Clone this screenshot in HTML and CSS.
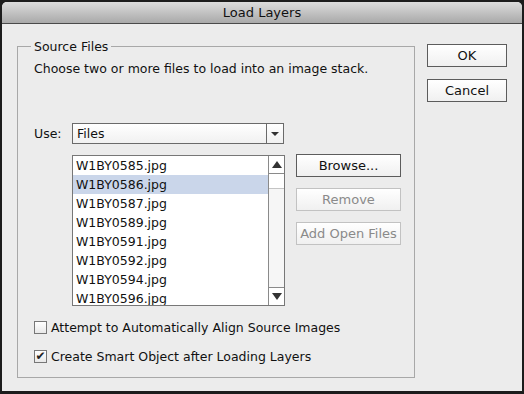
FILE: index.html
```html
<!DOCTYPE html>
<html lang="en">

<head>
    <meta charset="UTF-8">
    <meta name="viewport" content="width=device-width, initial-scale=1.0">
    <title>Load Layers</title>
    <link rel="stylesheet" href="styles.css">
</head>

<body>
    <div class="window">
        <div class="titlebar">Load Layers</div>

        <div class="content">
            <!-- Source Files group -->
            <fieldset class="group">
                <legend>Source Files</legend>
                <p class="hint">Choose two or more files to load into an image stack.</p>

                <div class="use-row">
                    <span class="use-label">Use:</span>
                    <div class="select">
                        <span class="select-value">Files</span>
                        <span class="select-arrow"><span class="tri-down"></span></span>
                    </div>
                </div>

                <div class="files-row">
                    <div class="list">
                        <ul class="list-items">
                            <li>W1BY0585.jpg</li>
                            <li class="selected">W1BY0586.jpg</li>
                            <li>W1BY0587.jpg</li>
                            <li>W1BY0589.jpg</li>
                            <li>W1BY0591.jpg</li>
                            <li>W1BY0592.jpg</li>
                            <li>W1BY0594.jpg</li>
                            <li>W1BY0596.jpg</li>
                        </ul>
                        <div class="scrollbar">
                            <span class="scroll-btn"><span class="tri-up"></span></span>
                            <span class="scroll-thumb"></span>
                            <span class="scroll-track"></span>
                            <span class="scroll-btn"><span class="tri-down big"></span></span>
                        </div>
                    </div>

                    <div class="list-buttons">
                        <button class="btn wide">Browse...</button>
                        <button class="btn wide" disabled>Remove</button>
                        <button class="btn wide" disabled>Add Open Files</button>
                    </div>
                </div>

                <label class="check">
                    <span class="box"></span>
                    Attempt to Automatically Align Source Images
                </label>
                <label class="check">
                    <span class="box checked">&#10004;</span>
                    Create Smart Object after Loading Layers
                </label>
            </fieldset>

            <!-- Dialog buttons -->
            <div class="dialog-buttons">
                <button class="btn">OK</button>
                <button class="btn">Cancel</button>
            </div>
        </div>
    </div>
</body>
</html>
```

FILE: styles.css
```css
body {
    margin: 0;
    background-color: #1c1c1c;
    font-family: "DejaVu Sans", Verdana, sans-serif;
    font-size: 12.5px;
    color: #111;
}

.window {
    margin: 2px 2px 0 2px;
    height: 389px;
    background-color: #ececec;
    border-radius: 5px 5px 0 0;
    overflow: hidden;
}

.titlebar {
    height: 21px;
    line-height: 22px;
    text-align: center;
    font-size: 13px;
    background: linear-gradient(#dcdcdc, #a9a9a9);
    border-bottom: 1px solid #4a4a4a;
}

.content {
    display: flex;
    padding: 15px 0 0 15px;
}

.group {
    margin: 0;
    width: 398px;
    height: 339px;
    box-sizing: border-box;
    border: 1px solid #a8a8a8;
    padding: 0 0 0 16px;
}

.group legend {
    padding: 0 3px;
    margin-left: -3px;
    line-height: 15px;
}

.hint {
    margin: 7px 0 0 0;
    line-height: 15px;
}

.use-row {
    display: flex;
    align-items: center;
    margin-top: 47px;
}

.use-label {
    width: 38px;
}

.select {
    display: flex;
    width: 212px;
    height: 21px;
    box-sizing: border-box;
    border: 1px solid #6a6a6a;
    background: linear-gradient(#ffffff, #f1f1f1);
}

.select-value {
    flex: 1;
    padding-left: 4px;
    line-height: 19px;
}

.select-arrow {
    width: 16px;
    border-left: 1px solid #6a6a6a;
    display: flex;
    align-items: center;
    justify-content: center;
}

.tri-down {
    width: 0;
    height: 0;
    border-left: 4px solid transparent;
    border-right: 4px solid transparent;
    border-top: 4px solid #333;
}

.tri-down.big {
    border-left-width: 5px;
    border-right-width: 5px;
    border-top-width: 7px;
}

.tri-up {
    width: 0;
    height: 0;
    border-left: 5px solid transparent;
    border-right: 5px solid transparent;
    border-bottom: 7px solid #333;
}

.files-row {
    display: flex;
    margin: 11px 0 0 38px;
}

.list {
    display: flex;
    width: 213px;
    height: 151px;
    box-sizing: border-box;
    border: 1px solid #777;
    background-color: #fff;
    overflow: hidden;
}

.list-items {
    flex: 1;
    list-style: none;
    margin: 0;
    padding: 0;
}

.list-items li {
    height: 19px;
    line-height: 19px;
    padding-left: 3px;
}

.list-items li.selected {
    background-color: #cad6ea;
}

.scrollbar {
    display: flex;
    flex-direction: column;
    width: 15px;
    border-left: 1px solid #8a8a8a;
    background-color: #f6f6f6;
}

.scroll-btn {
    height: 17px;
    display: flex;
    align-items: center;
    justify-content: center;
    background-color: #fff;
}

.scroll-btn:first-child {
    border-bottom: 1px solid #8a8a8a;
}

.scroll-btn:last-child {
    border-top: 1px solid #8a8a8a;
}

.scroll-thumb {
    height: 14px;
    background-color: #fff;
    border-bottom: 1px solid #c4c4c4;
}

.scroll-track {
    flex: 1;
}

.list-buttons {
    display: flex;
    flex-direction: column;
    gap: 11px;
    margin-left: 11px;
    margin-top: -1px;
}

.btn {
    width: 80px;
    height: 23px;
    padding: 0;
    font-family: inherit;
    font-size: 13px;
    color: #111;
    background: linear-gradient(#ffffff, #f0f0f0);
    border: 1px solid #5c5c5c;
    border-radius: 0;
}

.btn.wide {
    width: 105px;
}

.btn:disabled {
    color: #8a8a8a;
    border-color: #c2c2c2;
}

.check {
    display: flex;
    align-items: center;
    gap: 4px;
    line-height: 15px;
}

.check:first-of-type {
    margin-top: 14px;
}

.check + .check {
    margin-top: 14px;
}

.box {
    width: 13px;
    height: 13px;
    box-sizing: border-box;
    border: 1px solid #777;
    background: linear-gradient(#ffffff, #e8e8e8);
    font-size: 12px;
    line-height: 11px;
    text-align: center;
    color: #222;
}

.dialog-buttons {
    display: flex;
    flex-direction: column;
    gap: 12px;
    margin: 5px 0 0 12px;
}
```
